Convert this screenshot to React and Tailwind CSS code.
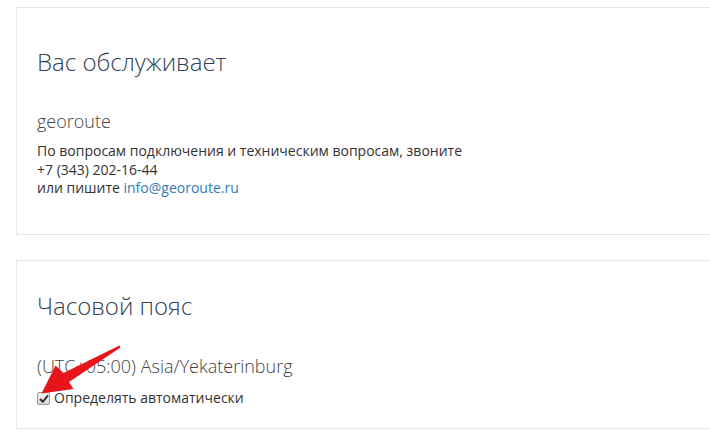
import React from "react";

function Arrow() {
  return (
    <svg
      className="absolute left-0 top-0 pointer-events-none"
      width="710"
      height="445"
      viewBox="0 0 710 445"
    >
      <path
        d="M119.5 345.5 L120.5 347.5 L69 382 L73.5 389 L41.5 393.5 L55.5 365.5 L63.5 373 Z"
        fill="#e8141b"
      />
    </svg>
  );
}

function Check() {
  return (
    <span className="inline-flex items-center justify-center w-[13px] h-[13px] rounded-[2px] border border-[#9a9a9a] bg-gradient-to-b from-[#f4f4f4] to-[#d8d8d8] mr-[4px] shrink-0">
      <svg width="10" height="9" viewBox="0 0 10 9">
        <path d="M1 5 L3.8 7.8 L9 1.4" fill="none" stroke="#333" strokeWidth="2" />
      </svg>
    </span>
  );
}

export default function App() {
  return (
    <div className="relative w-[710px] h-[445px] overflow-hidden bg-white font-['Open_Sans',sans-serif] text-[#333]">
      <div className="pt-[7px] pl-4 -mr-10 flex flex-col gap-[25px]">
        <div className="h-[228px] border border-[#e3e8ed] pl-[20px] pt-[39px]">
          <h3 className="text-[24px] leading-[30px] font-light text-[#2f4356]">
            Вас обслуживает
          </h3>
          <div className="mt-[32px] text-[18px] leading-[24px] font-light text-[#444]">
            georoute
          </div>
          <div className="mt-[9px] text-[14px] leading-[18.57px]">
            <div>По вопросам подключения и техническим вопросам, звоните</div>
            <div>+7 (343) 202-16-44</div>
            <div>
              или пишите <a className="text-[#337ab7]">info@georoute.ru</a>
            </div>
          </div>
        </div>
        <div className="h-[169px] border border-[#e3e8ed] pl-[20px] pt-[30px]">
          <h3 className="text-[24px] leading-[30px] font-light text-[#2f4356]">
            Часовой пояс
          </h3>
          <div className="mt-[33px] text-[18px] leading-[24px] font-light text-[#444]">
            (UTC+05:00) Asia/Yekaterinburg
          </div>
          <label className="mt-[11px] flex items-center text-[14px] leading-[18.57px]">
            <Check />
            <span>Определять автоматически</span>
          </label>
        </div>
      </div>
      <Arrow />
    </div>
  );
}
